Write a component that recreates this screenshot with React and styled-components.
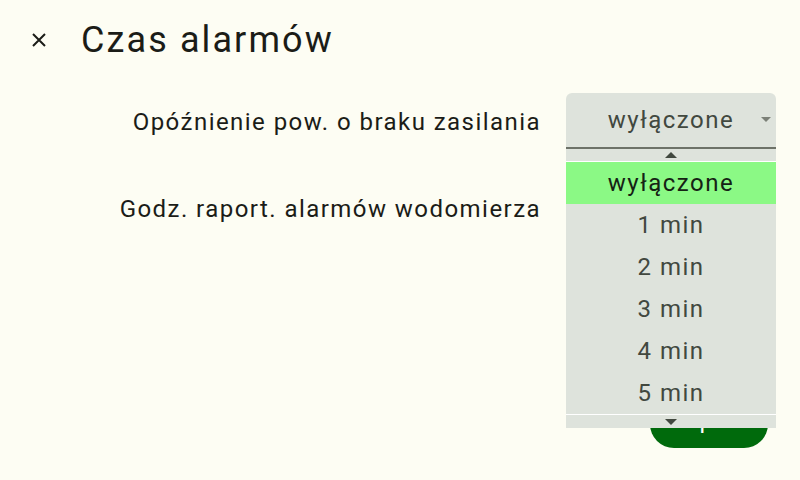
import React from "react";
import styled, { createGlobalStyle } from "styled-components";

const Global = createGlobalStyle`
  html, body { margin: 0; padding: 0; background: #fdfdf3; }
  * { box-sizing: border-box; }
`;

const Page = styled.div`
  width: 800px;
  height: 480px;
  background: #fdfdf3;
  font-family: Roboto, "Noto Sans", sans-serif;
  color: #1b1c17;
  display: flex;
  flex-direction: column;
  position: relative;
  overflow: hidden;
`;

const Header = styled.header`
  display: flex;
  align-items: center;
  height: 80px;
  padding-left: 24px;
`;

const CloseButton = styled.button`
  width: 30px;
  height: 30px;
  padding: 0;
  border: none;
  background: transparent;
  display: flex;
  align-items: center;
  justify-content: center;
  margin-right: 27px;
  color: #1b1c17;
`;

const Title = styled.h1`
  margin: 0;
  font-size: 36px;
  font-weight: 400;
  letter-spacing: 2.1px;
`;

const Form = styled.div`
  display: grid;
  grid-template-columns: 1fr 210px;
  column-gap: 25px;
  row-gap: 31px;
  padding: 13px 24px 0 0;
  align-items: center;
`;

const Label = styled.div`
  font-size: 24px;
  text-align: right;
  color: #1b1c17;
  line-height: 28px;
  padding-top: 2px;
  letter-spacing: 1.45px;
`;

const Field = styled.div`
  position: relative;
  height: 56px;
`;

const SelectBox = styled.div`
  height: 56px;
  background: #dee3dc;
  border-radius: 6px 6px 0 0;
  border-bottom: 2px solid #6d7268;
  display: flex;
  align-items: center;
  justify-content: center;
  position: relative;
  font-size: 24px;
  letter-spacing: 1.5px;
  color: #41483f;
`;

const Caret = styled.span`
  position: absolute;
  right: 5px;
  top: 24px;
  width: 0;
  height: 0;
  border-left: 5px solid transparent;
  border-right: 5px solid transparent;
  border-top: 5px solid #7b8077;
`;

const Dropdown = styled.div`
  position: absolute;
  top: 100%;
  left: 0;
  width: 100%;
  z-index: 10;
  background: #dee3dc;
  display: flex;
  flex-direction: column;
`;

const ScrollArrow = styled.div`
  height: ${(p) => p.$h}px;
  display: flex;
  justify-content: center;
  align-items: flex-start;
  padding-top: ${(p) => p.$pt}px;
  border-${(p) => (p.$up ? "bottom" : "top")}: 1px solid #ffffff;
`;

const Triangle = styled.span`
  width: 0;
  height: 0;
  border-left: 6px solid transparent;
  border-right: 6px solid transparent;
  ${(p) => (p.$up ? "border-bottom" : "border-top")}: 6px solid #41483f;
`;

const List = styled.div`
  height: 252px;
  overflow: hidden;
`;

const Option = styled.div`
  height: 42px;
  display: flex;
  align-items: center;
  justify-content: center;
  font-size: 24px;
  letter-spacing: 1.5px;
  color: ${(p) => (p.$active ? "#152214" : "#41483f")};
  background: ${(p) => (p.$active ? "#8bf985" : "transparent")};
`;

const Footer = styled.div`
  margin-top: auto;
  display: flex;
  justify-content: flex-end;
  padding: 0 32px 32px 0;
`;

const SaveButton = styled.button`
  width: 118px;
  height: 48px;
  border: none;
  border-radius: 24px;
  background: #006a0c;
  color: #ffffff;
  font-family: Roboto, sans-serif;
  font-size: 24px;
  letter-spacing: 1.5px;
  display: flex;
  align-items: center;
  justify-content: center;
  padding: 0 0 8px 0;
`;

const options = ["wyłączone", "1 min", "2 min", "3 min", "4 min", "5 min"];

export default function App() {
  return (
    <Page>
      <Global />
      <Header>
        <CloseButton aria-label="Zamknij">
          <svg width="14" height="14" viewBox="0 0 14 14">
            <path d="M1 1 L13 13 M13 1 L1 13" stroke="#1b1c17" strokeWidth="2" />
          </svg>
        </CloseButton>
        <Title>Czas alarmów</Title>
      </Header>
      <Form>
        <Label>Opóźnienie pow. o braku zasilania</Label>
        <Field>
          <SelectBox>
            wyłączone
            <Caret />
          </SelectBox>
          <Dropdown>
            <ScrollArrow $up $h={13} $pt={3}>
              <Triangle $up />
            </ScrollArrow>
            <List>
              {options.map((o, i) => (
                <Option key={o} $active={i === 0}>
                  {o}
                </Option>
              ))}
            </List>
            <ScrollArrow $h={14} $pt={4}>
              <Triangle />
            </ScrollArrow>
          </Dropdown>
        </Field>
        <Label>Godz. raport. alarmów wodomierza</Label>
        <Field>
          <SelectBox>
            wyłączone
            <Caret />
          </SelectBox>
        </Field>
      </Form>
      <Footer>
        <SaveButton>Zapisz</SaveButton>
      </Footer>
    </Page>
  );
}
